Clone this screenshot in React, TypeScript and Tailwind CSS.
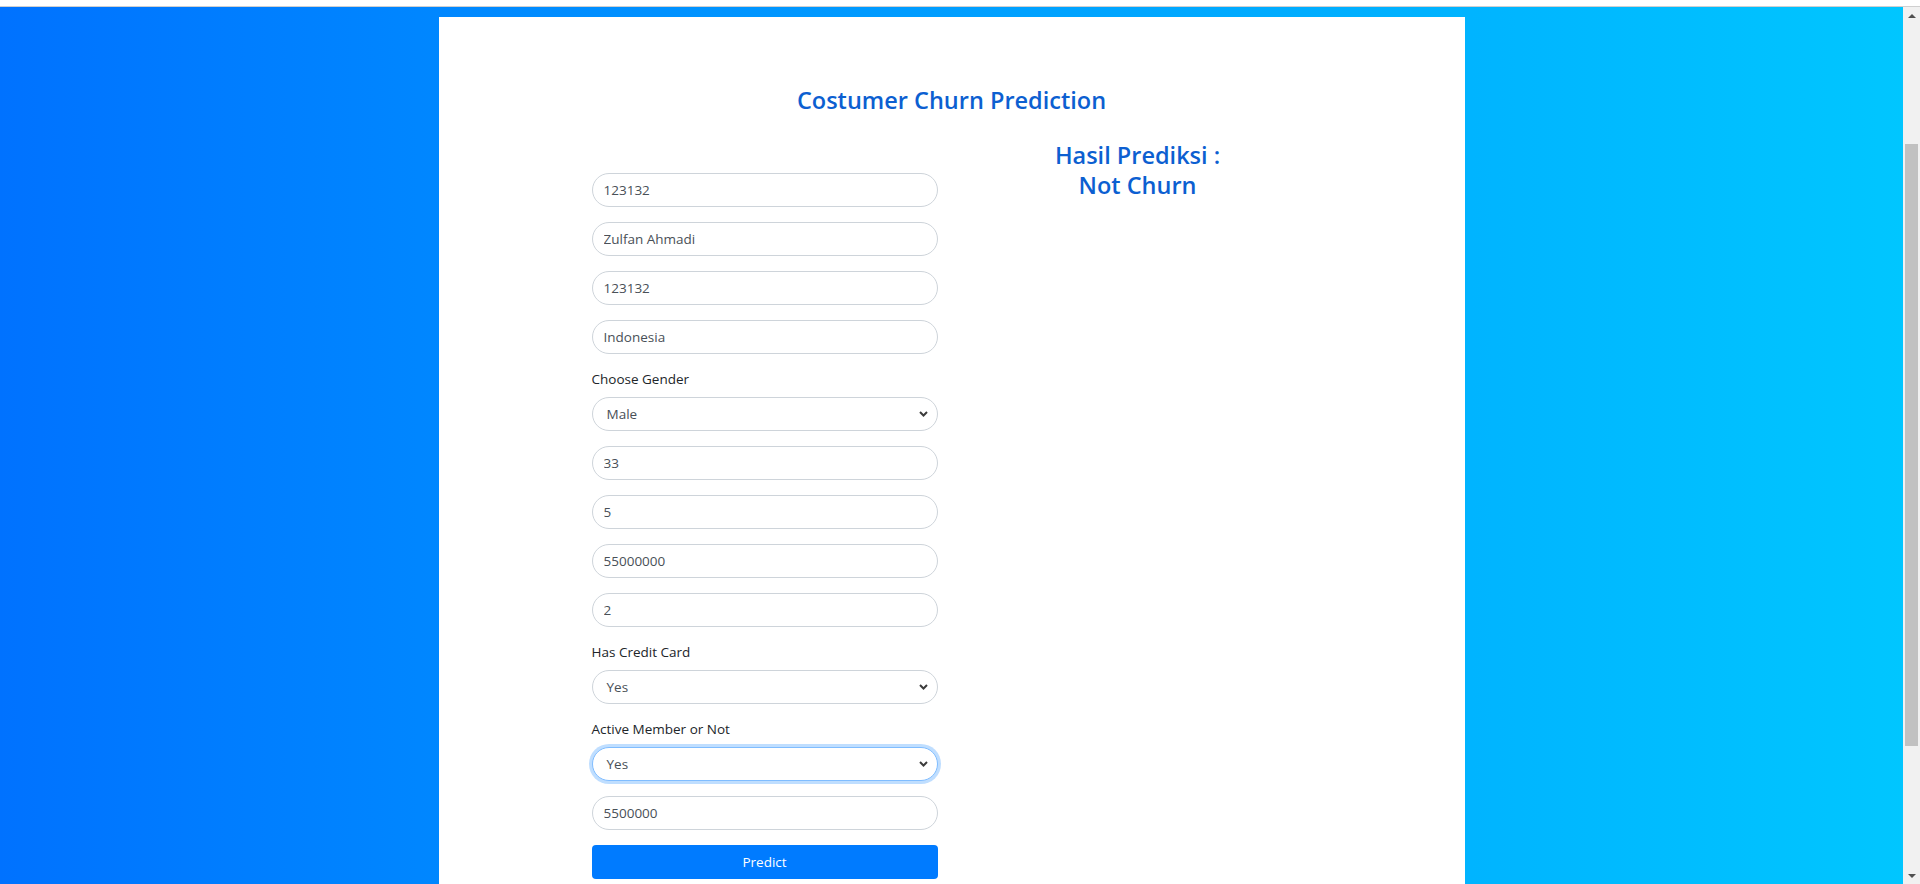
import React from "react";

const inputCls =
  "block w-full h-[34px] rounded-full border border-[#ced4da] bg-white px-[11px] text-[13.5px] text-[#495057] outline-none";

function Field({ value }: { value: string }) {
  return (
    <div className="mb-[15px]">
      <input className={inputCls} defaultValue={value} readOnly />
    </div>
  );
}

function SelectField({ label, value, focused }: { label: string; value: string; focused?: boolean }) {
  return (
    <div className="mb-[15px]">
      <label className="block mb-[8px] text-[13.5px] leading-[20px] text-[#212529]">{label}</label>
      <div
        className={
          focused
            ? "flex items-center h-[34px] rounded-full border border-[#80bdff] bg-white pl-[14px] pr-[9px] shadow-[0_0_0_3px_rgba(0,123,255,0.25)]"
            : "flex items-center h-[34px] rounded-full border border-[#ced4da] bg-white pl-[14px] pr-[9px]"
        }
      >
        <span className="flex-1 text-[13.5px] text-[#495057]">{value}</span>
        <svg width="9" height="6" viewBox="0 0 9 6" className="text-[#3c3c3c]">
          <polyline points="1,1 4.5,4.5 8,1" fill="none" stroke="currentColor" strokeWidth="2" />
        </svg>
      </div>
    </div>
  );
}

function ScrollBar() {
  return (
    <div className="w-[17px] bg-[#f1f1f1] flex flex-col items-center">
      <div className="h-[17px] flex items-center justify-center">
        <svg width="8" height="4" viewBox="0 0 8 4">
          <polygon points="0,4 4,0 8,4" fill="#505050" />
        </svg>
      </div>
      <div className="h-[120px]" />
      <div className="w-[13px] h-[602px] bg-[#c1c1c1]" />
      <div className="flex-1" />
      <div className="h-[17px] flex items-center justify-center">
        <svg width="8" height="4" viewBox="0 0 8 4">
          <polygon points="0,0 8,0 4,4" fill="#505050" />
        </svg>
      </div>
    </div>
  );
}

export default function App() {
  return (
    <div className="h-[884px] flex flex-col overflow-hidden bg-white font-['Open_Sans',sans-serif]">
      <div className="h-[7px] bg-white border-b border-[#cfcfcf]" />
      <div className="flex flex-1 min-h-0">
        <div className="flex-1 flex justify-center pt-[10px] bg-linear-to-r from-[#0072ff] to-[#00c6ff] overflow-hidden">
          <div className="w-[1026px] bg-white">
            {/* title */}
            <h4 className="mt-[69px] text-center text-[23.5px] leading-[29px] font-semibold text-[#0c5fd1]">
              Costumer Churn Prediction
            </h4>
            <div className="flex items-start mt-[25px]">
              {/* form */}
              <div className="ml-[153px] w-[346px] pt-[33px]">
                <Field value="123132" />
                <Field value="Zulfan Ahmadi" />
                <Field value="123132" />
                <Field value="Indonesia" />
                <SelectField label="Choose Gender" value="Male" />
                <Field value="33" />
                <Field value="5" />
                <Field value="55000000" />
                <Field value="2" />
                <SelectField label="Has Credit Card" value="Yes" />
                <SelectField label="Active Member or Not" value="Yes" focused />
                <Field value="5500000" />
                <button className="w-full h-[34px] rounded-[4px] bg-[#007bff] text-white text-[13.5px]">
                  Predict
                </button>
              </div>
              {/* result */}
              <div className="ml-[30px] w-[340px] text-center text-[23.5px] leading-[30px] font-semibold text-[#0c5fd1]">
                <div>Hasil Prediksi :</div>
                <div>Not Churn</div>
              </div>
            </div>
          </div>
        </div>
        <ScrollBar />
      </div>
    </div>
  );
}
